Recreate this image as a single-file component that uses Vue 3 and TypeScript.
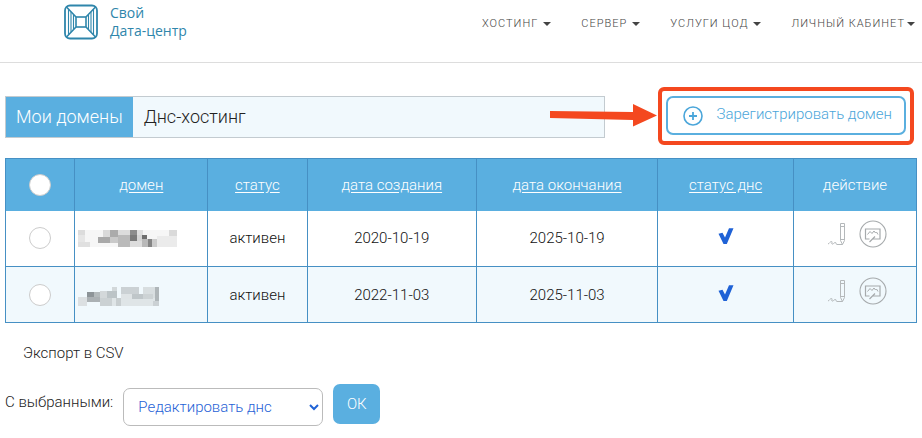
<script setup lang="ts">
import { ref } from 'vue'

interface Domain {
  id: string
  label: string
  status: string
  created: string
  expires: string
  mosaic: Tile[]
}

// x, y, width, height, fill
type Tile = [number, number, number, number, string]

const menu = ['ХОСТИНГ', 'СЕРВЕР', 'УСЛУГИ ЦОД', 'ЛИЧНЫЙ КАБИНЕТ']

const columns = ['домен', 'статус', 'дата создания', 'дата окончания', 'статус днс']

const domains: Domain[] = [
  {
    id: 'd1',
    label: 'Домен скрыт',
    status: 'активен',
    created: '2020-10-19',
    expires: '2025-10-19',
    mosaic: [
      [0, 0, 99, 17, '#f6f6f6'],
      [0, 0, 7, 5, '#dcdcdc'], [0, 5, 7, 7, '#e6e6e6'], [0, 12, 12, 5, '#e0e0e0'],
      [25, 0, 7, 7, '#dadada'], [32, 0, 8, 7, '#ababab'], [40, 0, 12, 7, '#dcdcdc'],
      [52, 0, 7, 5, '#8c8c8c'], [59, 0, 6, 7, '#dedede'], [91, 0, 8, 6, '#dadada'],
      [20, 7, 12, 6, '#a9a9a9'], [32, 7, 8, 6, '#c9c9c9'], [40, 5, 12, 12, '#bababa'],
      [52, 5, 7, 6, '#7a7a7a'], [52, 11, 13, 6, '#dddddd'], [59, 5, 6, 6, '#d5d5d5'],
      [64, 5, 5, 4, '#6f6f6f'], [64, 9, 6, 8, '#b9b9b9'], [70, 9, 4, 8, '#858585'],
      [74, 9, 5, 8, '#cccccc'], [79, 6, 20, 11, '#ebebeb'],
    ],
  },
  {
    id: 'd2',
    label: 'Домен скрыт',
    status: 'активен',
    created: '2022-11-03',
    expires: '2025-11-03',
    mosaic: [
      [0, 10, 9, 9, '#dce0e2'], [9, 5, 7, 5, '#8d9498'], [16, 5, 6, 5, '#b3babc'],
      [9, 10, 13, 5, '#abb1b4'], [22, 4, 7, 7, '#d3d8da'], [29, 4, 10, 7, '#bcc4c7'],
      [34, 0, 5, 4, '#d2d8da'], [22, 11, 12, 8, '#cbd1d3'], [34, 11, 47, 8, '#dfe5e7'],
      [38, 11, 5, 8, '#c8ced0'], [43, 0, 18, 7, '#cbd1d4'], [43, 7, 11, 5, '#dfe4e6'],
      [54, 7, 11, 5, '#bfc6c9'], [65, 0, 12, 11, '#d8dee0'], [65, 7, 10, 5, '#cdd3d5'],
      [77, 0, 4, 14, '#afb6b9'], [75, 14, 6, 5, '#cbd1d4'],
    ],
  },
]

const selected = ref<string[]>([])
const action = ref('dns')

function toggleAll(event: Event) {
  const on = (event.target as HTMLInputElement).checked
  selected.value = on ? domains.map((d) => d.id) : []
}
</script>

<template>
  <header class="header">
    <a class="brand" href="#">
      <svg class="brand-mark" viewBox="0 0 34 36" fill="none" stroke="#2f86ab" aria-hidden="true">
        <rect x="1" y="1.5" width="32" height="33" rx="5" stroke-width="1.8" />
        <rect x="12" y="13" width="10" height="10" stroke-width="1.6" />
        <path d="M2.500 3 12 13M31.500 3 22 13M2.500 33 12 23M31.500 33 22 23" stroke-width="1.6" />
        <path d="M4.500 5v26M7 8v20M9.500 11v14M29.500 5v26M27 8v20M24.500 11v14" stroke-width="1.1" />
      </svg>
      <span class="brand-name">Свой<br>Дата-центр</span>
    </a>
    <nav class="menu">
      <button v-for="item in menu" :key="item" class="menu-item" type="button">
        {{ item }}<span class="caret"></span>
      </button>
    </nav>
  </header>

  <main class="page">
    <div class="toolbar">
      <nav class="tabs">
        <a class="tab tab-active" href="#">Мои домены</a>
        <a class="tab" href="#">Днс-хостинг</a>
      </nav>
      <div class="highlight">
        <svg class="arrow" viewBox="0 0 108 24" aria-hidden="true">
          <path d="M0 8 83 9V1L107 12.500 83 23.500V17L0 15Z" fill="#f4481f" />
        </svg>
        <button class="register" type="button">
          <svg class="plus" viewBox="0 0 20 20" fill="none" stroke="#4ba6da" aria-hidden="true">
            <circle cx="10" cy="10" r="9" stroke-width="1.6" />
            <path d="M10 6v8M6 10h8" stroke-width="1.8" />
          </svg>
          <span class="register-text">Зарегистрировать домен</span>
        </button>
      </div>
    </div>

    <table class="domains">
      <colgroup>
        <col class="c-check"><col class="c-name"><col class="c-status"><col class="c-created">
        <col class="c-expires"><col class="c-dns"><col>
      </colgroup>
      <thead>
        <tr>
          <th>
            <input
              class="pick" type="checkbox" aria-label="Выбрать все"
              :checked="selected.length === domains.length" @change="toggleAll"
            >
          </th>
          <th v-for="name in columns" :key="name"><a href="#">{{ name }}</a></th>
          <th>действие</th>
        </tr>
      </thead>
      <tbody>
        <tr v-for="d in domains" :key="d.id">
          <td><input v-model="selected" class="pick" type="checkbox" :value="d.id" aria-label="Выбрать домен"></td>
          <td class="name">
            <svg class="mosaic" viewBox="0 0 100 20" role="img" :aria-label="d.label" shape-rendering="crispEdges">
              <rect v-for="(t, i) in d.mosaic" :key="i" :x="t[0]" :y="t[1]" :width="t[2]" :height="t[3]" :fill="t[4]" />
            </svg>
          </td>
          <td>{{ d.status }}</td>
          <td>{{ d.created }}</td>
          <td>{{ d.expires }}</td>
          <td>
            <svg class="tick" viewBox="0 0 16 18" role="img" aria-label="Включён">
              <path d="M.5 6.800 4.500 5.800 7 10.500 11 1.200H15.500L8.800 17H5.500Z" fill="#1f62d6" />
            </svg>
          </td>
          <td>
            <div class="actions">
              <button class="icon" type="button" aria-label="Редактировать">
                <svg class="pen" viewBox="0 0 20 26" fill="none" stroke="#b4b8ba" aria-hidden="true">
                  <path d="M13.500 2.500h4v17l-2 4-2-4ZM13.500 5.500h4M13.500 18.500h4M15.500 23.500H10c-1.500 0-.5-2.500-2-2-1.500.4-1.500 2-3 1.500-1-.4 1-2.500-.5-2.500S2.500 22.500 1 23" />
                </svg>
              </button>
              <button class="icon" type="button" aria-label="Просмотр">
                <svg class="board" viewBox="0 0 28 28" fill="none" stroke="#a6aaac" aria-hidden="true">
                  <circle cx="14" cy="14" r="13" stroke-width="1.1" />
                  <path d="M10.500 19H6.500V9h14.500v10h-7M10.500 22 16 16.500" stroke-width="1.2" />
                  <path d="M8.500 14.500l2.500-3 2 2 2-2.500 1.500 2 1-1 1.500 2.500" />
                </svg>
              </button>
            </div>
          </td>
        </tr>
      </tbody>
    </table>

    <a class="export" href="#">Экспорт в CSV</a>

    <form class="bulk" @submit.prevent>
      <label for="bulk-action">С выбранными:</label>
      <span class="select-wrap">
        <select id="bulk-action" v-model="action" class="select">
          <option value="dns">Редактировать днс</option>
        </select>
        <svg class="chevron" viewBox="0 0 10 7" fill="none" stroke="#1f62d6" stroke-width="2" aria-hidden="true">
          <path d="M1 1l4 4 4-4" />
        </svg>
      </span>
      <button class="ok" type="submit">ОК</button>
    </form>
  </main>
</template>

<style>
body {
  background: #fff;
  color: #222;
  font-family: Roboto, "Liberation Sans", sans-serif;
  font-size: 15px;
}
</style>

<style scoped>
* {
  box-sizing: border-box;
}

a {
  color: inherit;
  text-decoration: none;
}

button {
  font: inherit;
  cursor: pointer;
}

.header {
  display: flex;
  align-items: flex-start;
  justify-content: space-between;
  height: 63px;
  padding: 4px 7px 0 64px;
  border-bottom: 1px solid #ddd;
}

.brand {
  display: flex;
  gap: 12px;
  color: #2f86ab;
  font-family: "Open Sans", sans-serif;
  font-size: 14px;
  line-height: 18px;
}

.brand-mark {
  width: 34px;
  height: 36px;
}

.menu {
  display: flex;
  gap: 30px;
  padding-top: 13px;
}

.menu-item {
  display: flex;
  align-items: center;
  gap: 5px;
  padding: 0;
  border: 0;
  background: none;
  color: #444;
  font-size: 11px;
  font-weight: 350;
  line-height: 14px;
  letter-spacing: 1px;
  white-space: nowrap;
}

.menu-item:last-child {
  gap: 2px;
}

.caret {
  border: 4px solid transparent;
  border-top-color: #444;
  border-bottom: 0;
}

.page {
  padding: 24px 5px 12px;
}

.toolbar {
  display: flex;
  align-items: center;
  justify-content: space-between;
  padding-right: 3px;
}

.tabs {
  display: flex;
  flex: 0 0 66%;
  border: 1px solid #c3cbd0;
  background: #f1f9fd;
  margin-top: 2px;
}

.tab {
  padding: 0 11px;
  font-size: 18px;
  font-weight: 300;
  line-height: 40px;
}

.tab-active {
  padding: 0 10px;
  background: #5aafe0;
  color: #fff;
}

.highlight {
  position: relative;
  padding: 5px 4px 6px;
  border: 4px solid #f4481f;
  border-radius: 6px;
}

.arrow {
  position: absolute;
  top: 12px;
  right: 100%;
  width: 108px;
  height: 24px;
  margin-right: 4px;
}

.register {
  display: flex;
  align-items: center;
  gap: 14px;
  height: 39px;
  padding: 0 12px 0 15px;
  border: 2px solid #5aafdf;
  border-radius: 7px;
  background: #fff;
  color: #4ba6da;
  font-size: 15px;
  font-weight: 300;
  white-space: nowrap;
}

.register-text {
  padding-bottom: 4px;
}

.plus {
  width: 20px;
  height: 20px;
}

.domains {
  width: 100%;
  margin-top: 13px;
  border-collapse: collapse;
  table-layout: fixed;
  color: #111;
  font-size: 15px;
  font-weight: 350;
  text-align: center;
}

.c-check { width: 7.6%; }
.c-name { width: 14.6%; }
.c-status { width: 10.9%; }
.c-created { width: 18.6%; }
.c-expires { width: 19.9%; }
.c-dns { width: 14.9%; }

th,
td {
  padding: 0;
  border: 1px solid #4690c4;
}

th {
  height: 52px;
  border-bottom: 0;
  background: #5aafe0;
  color: #fff;
  font-weight: 350;
}

th a {
  text-decoration: underline;
  text-underline-offset: 2px;
}

td {
  height: 56px;
}

tbody td {
  border-top: 0;
}

tbody tr:nth-child(even) {
  background: #f1f9fd;
}

.pick {
  display: block;
  width: 22px;
  height: 22px;
  margin: 0 auto;
  border: 1px solid #ccc;
  border-radius: 50%;
  appearance: none;
  background: #fff;
}

.pick:checked {
  background: #5aafe0;
}

.name {
  padding: 4px 0 0 3px;
  text-align: left;
}

.mosaic {
  display: block;
  width: 100px;
  height: 20px;
}

.tick {
  width: 16px;
  height: 18px;
}

.actions {
  display: flex;
  align-items: center;
  justify-content: center;
  gap: 12px;
  padding: 0 0 8px 4px;
}

.icon {
  padding: 0;
  border: 0;
  background: none;
}

.icon svg {
  display: block;
}

.pen {
  width: 20px;
  height: 26px;
}

.board {
  width: 28px;
  height: 28px;
}

.export {
  display: inline-block;
  margin: 20px 18px 0;
  color: #222;
  line-height: 20px;
  font-weight: 300;
}

.bulk {
  display: flex;
  align-items: flex-start;
  gap: 10px;
  margin-top: 21px;
  color: #222;
  font-weight: 300;
}

.bulk label {
  line-height: 36px;
}

.select-wrap {
  position: relative;
  margin-top: 4px;
}

.select {
  width: 200px;
  height: 38px;
  padding: 0 24px 0 14px;
  border: 1px solid #bbb;
  border-radius: 7px;
  appearance: none;
  background: #fff;
  color: #1f62d6;
  font: inherit;
  font-weight: 350;
}

.chevron {
  position: absolute;
  top: 16px;
  right: 4px;
  width: 10px;
  height: 7px;
  pointer-events: none;
}

.ok {
  width: 47px;
  height: 40px;
  padding: 0;
  border: 0;
  border-radius: 7px;
  background: #5aafe0;
  color: #fff;
}
</style>
